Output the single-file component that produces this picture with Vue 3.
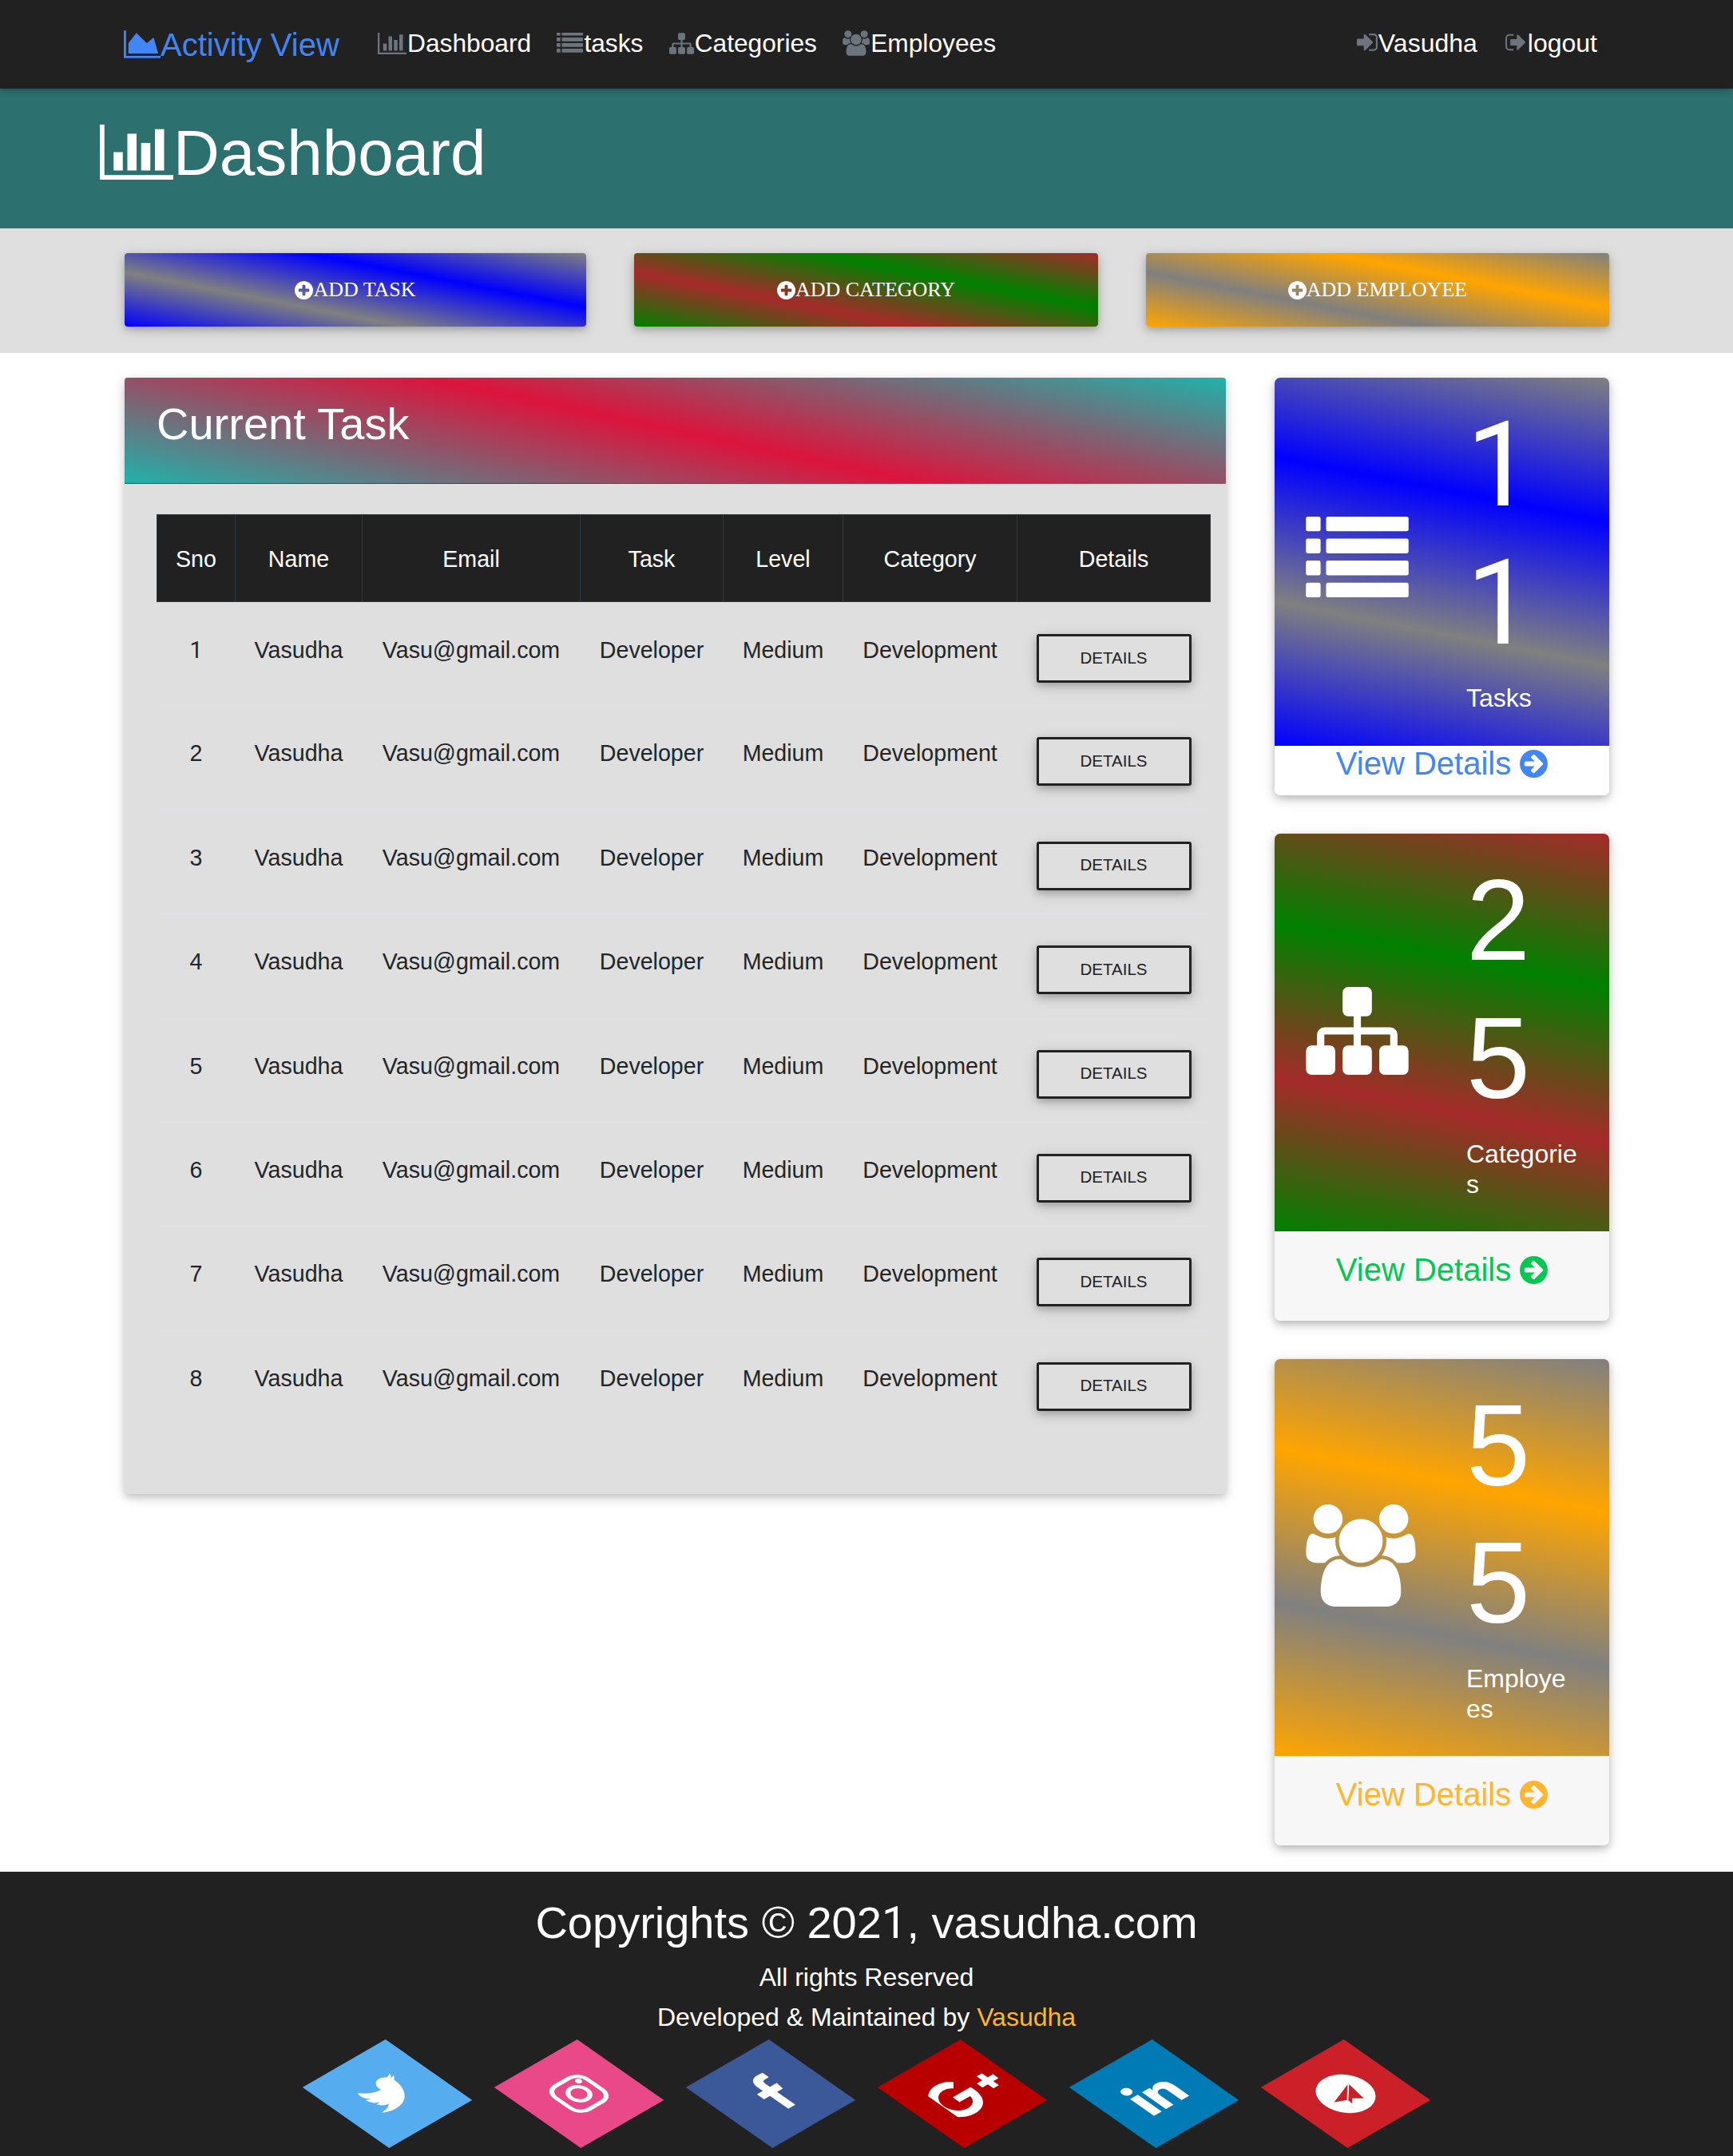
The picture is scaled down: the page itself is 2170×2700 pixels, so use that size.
<template>
  <div class="page">
    <nav class="navbar">
      <a class="brand">
        <svg class="ic-brand" viewBox="0 128 2048 1536"><path :d="icons.area" /></svg>Activity View
      </a>
      <a v-for="l in leftLinks" :key="l.text" class="nav-link">
        <svg :class="l.cls" :viewBox="l.box"><path :d="icons[l.icon]" /></svg>{{ l.text }}
      </a>
      <div class="nav-right">
        <a v-for="l in rightLinks" :key="l.text" class="nav-link">
          <svg class="ic-sign" :viewBox="l.box"><path :d="icons[l.icon]" /></svg>{{ l.text }}
        </a>
      </div>
    </nav>

    <header class="title-bar">
      <svg class="ic-title" viewBox="0 128 2048 1536"><path :d="icons.bar" /></svg>
      <h1>Dashboard</h1>
    </header>

    <section class="actions">
      <button v-for="a in actions" :key="a.text" class="action" :class="a.grad">
        <svg class="ic-plus" viewBox="128 128 1536 1536"><path fill-rule="evenodd" :d="icons.plus" /></svg>{{ a.text }}
      </button>
    </section>

    <main class="content">
      <section class="task-card">
        <div class="task-head">Current Task</div>
        <div class="task-body">
          <table>
            <colgroup>
              <col v-for="w in colWidths" :key="w" :width="w" />
            </colgroup>
            <thead>
              <tr>
                <th v-for="h in headers" :key="h">{{ h }}</th>
              </tr>
            </thead>
            <tbody>
              <tr v-for="n in 8" :key="n">
                <td :class="{ 'plain-one': n === 1 }">{{ n }}</td>
                <td>Vasudha</td>
                <td>Vasu@gmail.com</td>
                <td>Developer</td>
                <td>Medium</td>
                <td>Development</td>
                <td><button class="details">Details</button></td>
              </tr>
            </tbody>
          </table>
        </div>
      </section>

      <aside class="side">
        <div v-for="s in stats" :key="s.label" class="stat">
          <div class="stat-top" :class="s.grad">
            <div class="stat-icon">
              <svg v-if="s.icon === 'list'" class="ic-list" viewBox="0 0 1792 1408">
                <template v-for="y in [0, 384, 768, 1152]" :key="y">
                  <rect x="0" :y="y" width="256" height="256" rx="32" />
                  <rect x="352" :y="y" width="1440" height="256" rx="32" />
                </template>
              </svg>
              <svg v-else-if="s.icon === 'sitemap'" class="ic-map" viewBox="0 128 1792 1536"><path :d="icons.sitemap" /></svg>
              <svg v-else class="ic-users" viewBox="0 0 1920 1792"><path :d="icons.users" /></svg>
            </div>
            <div class="stat-text">
              <div class="stat-num" :class="{ 'plain-one': s.num === '11' }">{{ s.num }}</div>
              <div class="stat-label">{{ s.label }}</div>
            </div>
          </div>
          <div class="stat-foot" :class="s.foot">
            View Details
            <svg class="ic-arrow" viewBox="0 128 1536 1536"><path fill-rule="evenodd" :d="icons.arrow" /></svg>
          </div>
        </div>
      </aside>
    </main>

    <footer class="footer">
      <h2>Copyrights © 202<span class="plain-one">1</span>, vasudha.com</h2>
      <p>All rights Reserved</p>
      <p>Developed &amp; Maintained by <a>Vasudha</a></p>
      <div class="socials">
        <a v-for="t in tiles" :key="t.name" class="tile" :class="t.name">
          <svg v-if="t.path" :class="t.cls" :viewBox="t.box"><path :d="t.path" /></svg>
          <svg v-else-if="t.name === 'insta'" class="soc" viewBox="-30 -30 60 60">
            <rect x="-23" y="-23" width="46" height="46" rx="13" class="line" />
            <circle r="11" class="line" />
            <circle cx="14" cy="-14" r="3.6" />
          </svg>
          <svg v-else class="soc" viewBox="-30 -30 60 60">
            <circle r="30" />
            <path class="plane" d="M13.6 -9.3L9.2 16.3L0 9L-5.9 14.8L-5.5 8L-18.9 2Z" />
            <path class="slit" d="M13.6 -9.3L-5.5 8" />
          </svg>
        </a>
      </div>
    </footer>
  </div>
</template>

<script setup>
const icons = {
  area: 'M2048 1536v128h-2048v-1536h128v1408h1920zm-384-1024l256 896h-1664v-576l448-576 576 576z',
  bar: 'M640 896v512h-256v-512h256zm384-512v1024h-256v-1024h256zm1024 1152v128h-2048v-1536h128v1408h1920zm-640-896v768h-256v-768h256zm384-384v1152h-256v-1152h256z',
  listNav: 'M256 1120v192q0 32-32 32h-192q-32 0-32-32v-192q0-32 32-32h192q32 0 32 32zm0-384v192q0 32-32 32h-192q-32 0-32-32v-192q0-32 32-32h192q32 0 32 32zm0-384v192q0 32-32 32h-192q-32 0-32-32v-192q0-32 32-32h192q32 0 32 32zm1536 768v192q0 32-32 32h-1376q-32 0-32-32v-192q0-32 32-32h1376q32 0 32 32zm-1536-1152v192q0 32-32 32h-192q-32 0-32-32v-192q0-32 32-32h192q32 0 32 32zm1536 768v192q0 32-32 32h-1376q-32 0-32-32v-192q0-32 32-32h1376q32 0 32 32zm0-384v192q0 32-32 32h-1376q-32 0-32-32v-192q0-32 32-32h1376q32 0 32 32zm0-384v192q0 32-32 32h-1376q-32 0-32-32v-192q0-32 32-32h1376q32 0 32 32z',
  sitemap: 'M1792 1248v320q0 40-28 68t-68 28h-320q-40 0-68-28t-28-68v-320q0-40 28-68t68-28h96v-192h-512v192h96q40 0 68 28t28 68v320q0 40-28 68t-68 28h-320q-40 0-68-28t-28-68v-320q0-40 28-68t68-28h96v-192h-512v192h96q40 0 68 28t28 68v320q0 40-28 68t-68 28h-320q-40 0-68-28t-28-68v-320q0-40 28-68t68-28h96v-192q0-52 38-90t90-38h512v-192h-96q-40 0-68-28t-28-68v-320q0-40 28-68t68-28h320q40 0 68 28t28 68v320q0 40-28 68t-68 28h-96v192h512q52 0 90 38t38 90v192h96q40 0 68 28t28 68z',
  users: 'M593 896q-162 5-265 128h-134q-82 0-138-40.5t-56-118.5q0-353 124-353 6 0 43.5 21t97.5 42.5 119 21.5q67 0 133-23-5 37-5 66 0 139 81 256zm1071 637q0 120-73 189.5t-194 69.5h-874q-121 0-194-69.5t-73-189.5q0-53 3.5-103.5t14-109 26.5-108.5 43-97.5 62-81 85.5-53.5 111.5-20q10 0 43 21.5t73 48 107 48 135 21.5 135-21.5 107-48 73-48 43-21.5q61 0 111.5 20t85.5 53.5 62 81 43 97.5 26.5 108.5 14 109 3.5 103.5zm-1024-1277q0 106-75 181t-181 75-181-75-75-181 75-181 181-75 181 75 75 181zm704 384q0 159-112.5 271.5t-271.5 112.5-271.5-112.5-112.5-271.5 112.5-271.5 271.5-112.5 271.5 112.5 112.5 271.5zm576 225q0 78-56 118.5t-138 40.5h-134q-103-123-265-128 81-117 81-256 0-29-5-66 66 23 133 23 59 0 119-21.5t97.5-42.5 43.5-21q124 0 124 353zm-128-609q0 106-75 181t-181 75-181-75-75-181 75-181 181-75 181 75 75 181z',
  signIn: 'M1184 896q0 26-19 45l-544 544q-19 19-45 19t-45-19-19-45v-288h-448q-26 0-45-19t-19-45v-384q0-26 19-45t45-19h448v-288q0-26 19-45t45-19 45 19l544 544q19 19 19 45zm352-352v704q0 119-84.5 203.5t-203.5 84.5h-320q-13 0-22.5-9.5t-9.5-22.5q0-4-1-20t-.5-26.5 3-23.5 10-19.5 20.5-6.5h320q66 0 113-47t47-113v-704q0-66-47-113t-113-47h-312l-11.5-1-11.5-3-8-5.5-7-9-2-13.5q0-4-1-20t-.5-26.5 3-23.5 10-19.5 20.5-6.5h320q119 0 203.5 84.5t84.5 203.5z',
  signOut: 'M704 1440q0 4 1 20t.5 26.5-3 23.5-10 19.5-20.5 6.5h-320q-119 0-203.5-84.5t-84.5-203.5v-704q0-119 84.5-203.5t203.5-84.5h320q13 0 22.5 9.5t9.5 22.5q0 4 1 20t.5 26.5-3 23.5-10 19.5-20.5 6.5h-320q-66 0-113 47t-47 113v704q0 66 47 113t113 47h312l11.5 1 11.5 3 8 5.5 7 9 2 13.5zm928-544q0 26-19 45l-544 544q-19 19-45 19t-45-19-19-45v-288h-448q-26 0-45-19t-19-45v-384q0-26 19-45t45-19h448v-288q0-26 19-45t45-19 45 19l544 544q19 19 19 45z',
  plus: 'M1344 960v-128q0-26-19-45t-45-19h-256v-256q0-26-19-45t-45-19h-128q-26 0-45 19t-19 45v256h-256q-26 0-45 19t-19 45v128q0 26 19 45t45 19h256v256q0 26 19 45t45 19h128q26 0 45-19t19-45v-256h256q26 0 45-19t19-45zm320-64q0 209-103 385.5t-279.5 279.5-385.5 103-385.5-103-279.5-279.5-103-385.5 103-385.5 279.5-279.5 385.5-103 385.5 103 279.5 279.5 103 385.5z',
  arrow: 'M1285 896q0-27-18-45l-91-91-362-362q-18-18-45-18t-45 18l-91 91q-18 18-18 45t18 45l189 189h-502q-26 0-45 19t-19 45v128q0 26 19 45t45 19h502l-189 189q-19 19-19 45t19 45l91 91q18 18 45 18t45-18l362-362 91-91q18-18 18-45zm251 0q0 209-103 385.5t-279.5 279.5-385.5 103-385.5-103-279.5-279.5-103-385.5 103-385.5 279.5-279.5 385.5-103 385.5 103 279.5 279.5 103 385.5z'
}

const leftLinks = [
  { text: 'Dashboard', icon: 'bar', cls: 'ic-bar', box: '0 128 2048 1536' },
  { text: 'tasks', icon: 'listNav', cls: 'ic-tasks', box: '0 0 1792 1408' },
  { text: 'Categories', icon: 'sitemap', cls: 'ic-cats', box: '0 128 1792 1536' },
  { text: 'Employees', icon: 'users', cls: 'ic-emps', box: '0 0 1920 1792' }
]

const rightLinks = [
  { text: 'Vasudha', icon: 'signIn', box: '0 256 1536 1408' },
  { text: 'logout', icon: 'signOut', box: '0 256 1632 1408' }
]

const actions = [
  { text: 'ADD TASK', grad: 'grad-blue' },
  { text: 'ADD CATEGORY', grad: 'grad-green' },
  { text: 'ADD EMPLOYEE', grad: 'grad-orange' }
]

const headers = ['Sno', 'Name', 'Email', 'Task', 'Level', 'Category', 'Details']
const colWidths = [98, 159, 273, 179, 150, 218, 242]

const stats = [
  { num: '11', label: 'Tasks', icon: 'list', grad: 'grad-blue', foot: 'foot-blue' },
  { num: '25', label: 'Categories', icon: 'sitemap', grad: 'grad-green', foot: 'foot-green' },
  { num: '55', label: 'Employees', icon: 'users', grad: 'grad-orange', foot: 'foot-orange' }
]

const tiles = [
  { name: 'twitter', cls: 'soc', box: '0 0 1792 1792', path: 'M1684 408q-67 98-162 167 1 14 1 42 0 130-38 259.5t-115.5 248.5-184.5 210.5-258 146-323 54.5q-271 0-496-145 35 4 78 4 225 0 401-138-105-2-188-64.5t-114-159.5q33 5 61 5 43 0 85-11-112-23-185.5-111.5t-73.5-205.5v-4q68 38 146 41-66-44-105-115t-39-154q0-88 44-163 121 149 294.5 238.5t371.5 99.5q-8-38-8-74 0-134 94.5-228.5t228.5-94.5q140 0 236 102 109-21 205-78-37 115-142 178 91-10 182-51z' },
  { name: 'insta' },
  { name: 'facebook', cls: 'soc', box: '-70 -50 1792 1792', path: 'M1343 12v264h-157q-86 0-116 36t-30 108v189h293l-39 296h-254v759h-306v-759h-255v-296h255v-218q0-186 104-288.5t277-102.5q147 0 228 12z' },
  { name: 'gplus', cls: 'soc wide', box: '0 0 2048 1792', path: 'M1181 913q0 208-87 370.5t-248 254-369 91.5q-149 0-285-58t-234-156-156-234-58-285 58-285 156-234 234-156 285-58q286 0 491 192l-199 191q-117-113-292-113-123 0-227.5 62t-165.5 168.5-61 232.5 61 232.5 165.5 168.5 227.5 62q83 0 152.5-23t114.5-57.5 78.5-78.5 49-83 21.5-74h-412v-252h685q12 63 12 122zm859-122v210h-209v209h-210v-209h-209v-210h209v-209h210v209h209z' },
  { name: 'linkedin', cls: 'soc', box: '0 0 1792 1792', path: 'M477 625v991h-330v-991h330zm21-306q1 73-50.5 122t-135.5 49h-2q-82 0-132-49t-50-122q0-74 51.5-122.5t134.5-48.5 133 48.5 51 122.5zm1166 729v568h-329v-530q0-105-40.5-164.5t-126.5-59.5q-63 0-105.5 34.5t-63.5 85.5q-11 30-11 81v553h-329q2-399 2-647t-1-296l-1-48h329v144h-2q20-32 41-56t56.5-52 87-43.5 114.5-15.5q171 0 275 113.5t104 332.5z' },
  { name: 'plane-tile' }
]
</script>

<style>
html, body {
  background: #fff;
}
</style>

<style scoped>
.page {
  font-family: "Liberation Sans", Arial, sans-serif;
  color: #212529;
}
svg {
  flex: none;
  fill: currentColor;
  display: block;
}
/* Liberation's 1 has a foot, the reference's does not */
.plain-one {
  font-family: Roboto, sans-serif;
}

.navbar {
  height: 111px;
  background: #212121;
  display: flex;
  align-items: center;
  padding: 0 170px 0 155px;
  gap: 32.3px;
  position: relative;
  z-index: 2;
  box-shadow: 0 2px 9px rgba(0, 0, 0, .3);
}
.brand {
  display: flex;
  align-items: center;
  color: #4285f4;
  font-size: 40px;
  line-height: 48px;
  margin-right: 16px;
}
.ic-brand {
  width: 46px;
  height: 35px;
}
.nav-link {
  display: flex;
  align-items: center;
  color: #fff;
  font-size: 31.7px;
  line-height: 38px;
  margin-bottom: 3px;
}
.nav-link svg {
  color: #6c757d;
  margin-right: 1px;
}
.ic-bar { width: 36px; height: 27px; }
.ic-tasks { width: 33px; height: 26px; }
.ic-cats { width: 31px; height: 27px; }
.ic-emps { width: 34px; height: 32px; }
.ic-sign { width: 26px; height: 24px; }
.nav-right {
  margin-left: auto;
  display: flex;
  gap: 34px;
}
.nav-right .nav-link {
  font-size: 32px;
}
.nav-right .nav-link:last-child svg {
  margin-right: 3px;
}

.title-bar {
  height: 175px;
  background: #2d7070;
  padding: 34px 0 0 125px;
  box-sizing: border-box;
  display: flex;
  align-items: flex-start;
  color: #fff;
}
.ic-title {
  width: 92px;
  height: 69px;
  margin-top: 11px;
}
h1 {
  margin: 0;
  font-size: 80px;
  line-height: 94px;
  font-weight: 400;
}

.actions {
  height: 156px;
  box-sizing: border-box;
  background: #dfdfdf;
  padding: 31px 155px 0 156px;
  display: grid;
  grid-template-columns: 578px 581px 580px;
  gap: 60px;
}
.action {
  height: 92px;
  border: 0;
  border-radius: 4px;
  color: #fff;
  font-family: "Liberation Serif", "Times New Roman", serif;
  font-size: 26px;
  display: flex;
  align-items: center;
  justify-content: center;
  padding: 0;
  box-shadow: 0 4px 9px rgba(0, 0, 0, .18), 0 4px 18px rgba(0, 0, 0, .15);
}
.ic-plus {
  width: 23px;
  height: 23px;
}

.grad-blue { background: linear-gradient(11deg, blue, gray, blue, gray); }
.grad-green { background: linear-gradient(11deg, green, brown, green, brown); }
.grad-orange { background: linear-gradient(11deg, orange, gray, orange, gray); }

.content {
  display: flex;
  align-items: flex-start;
  gap: 61px;
  padding: 31px 155px 33px 156px;
}
.task-card {
  width: 1379px;
  flex: none;
  background: #dfdfdf;
  border-radius: 4px;
  box-shadow: 0 4px 9px rgba(0, 0, 0, .16), 0 4px 18px rgba(0, 0, 0, .12);
}
.task-head {
  height: 133px;
  box-sizing: border-box;
  padding: 25px 0 0 40px;
  border-radius: 4px 4px 0 0;
  color: #fff;
  font-size: 56px;
  line-height: 65px;
  background: linear-gradient(12deg, lightseagreen, crimson, lightseagreen);
  border-bottom: 1px solid rgba(0, 0, 0, .2);
}
.task-body {
  padding: 38px 20px 74px 40px;
}
table {
  width: 1319px;
  table-layout: fixed;
  border-collapse: collapse;
  font-size: 28.6px;
  line-height: 43px;
  text-align: center;
}
th {
  height: 106px;
  padding: 2px 0 0;
  background: #212121;
  color: #fff;
  font-weight: 400;
  border: 1px solid #32383e;
}
td {
  height: 130.4px;
  box-sizing: border-box;
  padding: 38px 0 0;
  vertical-align: top;
  border-top: 1px solid #dee2e6;
}
tbody tr:first-child td {
  border-top: 0;
  padding-top: 39px;
}
.details {
  display: block;
  box-sizing: border-box;
  width: 194px;
  height: 61px;
  margin: 1px auto 0;
  background: transparent;
  border: 3.5px solid #212121;
  border-radius: 3px;
  color: #212121;
  font-family: "Liberation Sans", Arial, sans-serif;
  font-size: 20.5px;
  text-transform: uppercase;
  padding: 0 0 2px;
  box-shadow: 0 4px 9px rgba(0, 0, 0, .18), 0 4px 18px rgba(0, 0, 0, .15);
}

.side {
  width: 419px;
  flex: none;
  display: flex;
  flex-direction: column;
  gap: 48px;
}
.stat {
  border-radius: 7px;
  background: #f7f7f7;
  box-shadow: 0 4px 9px rgba(0, 0, 0, .18), 0 4px 18px rgba(0, 0, 0, .15);
}
.stat-top {
  display: flex;
  align-items: center;
  box-sizing: border-box;
  min-height: 461px;
  padding: 23px 0 40px;
  border-radius: 7px 7px 0 0;
  color: #fff;
}
.stat-icon {
  width: 240px;
  padding-left: 39px;
  box-sizing: border-box;
}
.ic-list { width: 129px; height: 101px; margin-top: 5px; }
.ic-map { width: 129px; height: 110px; margin-top: 14px; }
.ic-users { width: 138px; height: 128px; margin-top: 12px; }
.stat-text {
  width: 140px;
  word-break: break-all;
}
.stat-num {
  font-size: 144px;
  line-height: 172.8px;
}
.stat-num.plain-one {
  font-size: 148px;
}
.stat-label {
  margin-top: 13px;
  font-size: 32px;
  line-height: 38px;
}
.stat-foot {
  display: flex;
  justify-content: center;
  align-items: center;
  gap: 11px;
  font-size: 40px;
  line-height: 49px;
  padding: 24px 0 39px;
  border-radius: 0 0 7px 7px;
}
.ic-arrow {
  width: 35px;
  height: 35px;
}
.foot-blue {
  background: #fff;
  line-height: 45px;
  padding: 0 0 17px;
  color: #4285f4;
}
.foot-green { color: #00c851; }
.foot-orange { color: #ffb52e; }

.footer {
  height: 356px;
  box-sizing: border-box;
  background: #212121;
  color: #fff;
  text-align: center;
  padding-top: 30px;
}
h2 {
  margin: 0 0 9px;
  font-size: 56px;
  line-height: 67.2px;
  font-weight: 400;
}
.footer p {
  margin: 0;
  font-size: 32px;
  line-height: 50px;
}
.footer p a {
  color: #ffb52e;
}
.socials {
  margin-top: 11px;
  display: flex;
  justify-content: center;
  gap: 120.2px;
}
.tile {
  width: 120px;
  height: 120px;
  display: flex;
  align-items: center;
  justify-content: center;
  color: #fff;
  transform: rotate(-30deg) skew(25deg);
}
.soc { width: 60px; height: 60px; }
.wide {
  width: 77px;
  height: 67px;
  transform: translate(8px, 1.4px);
}
.twitter { background: #55acee; }
.insta { background: #e94989; }
.facebook { background: #3b5998; }
.gplus { background: #b90000; }
.linkedin { background: #007bb6; }
.plane-tile { background: #cb2027; }
.line {
  fill: none;
  stroke: #fff;
  stroke-width: 5;
}
.plane { fill: #cb2027; }
.slit {
  fill: none;
  stroke: #fff;
  stroke-width: 1.5;
}
</style>
